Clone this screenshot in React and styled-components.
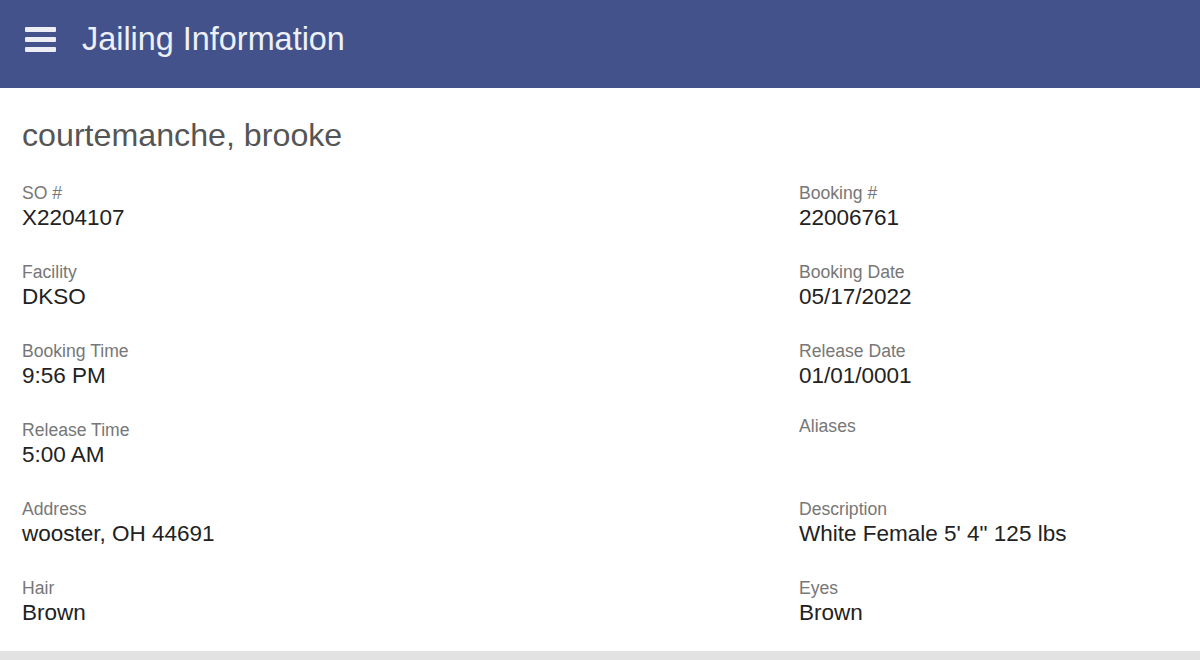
import React from 'react'
import styled, { createGlobalStyle } from 'styled-components'

const GlobalStyle = createGlobalStyle`
    html, body {
        margin: 0;
        padding: 0;
        background: #e2e2e2;
        font-family: "Liberation Sans", Arial, Helvetica, sans-serif;
    }
`

const fields = [
    ['SO #', 'X2204107'],
    ['Booking #', '22006761'],
    ['Facility', 'DKSO'],
    ['Booking Date', '05/17/2022'],
    ['Booking Time', '9:56 PM'],
    ['Release Date', '01/01/0001'],
    ['Release Time', '5:00 AM'],
    ['Aliases', ''],
    ['Address', 'wooster, OH 44691'],
    ['Description', 'White Female 5\' 4" 125 lbs'],
    ['Hair', 'Brown'],
    ['Eyes', 'Brown'],
]

const App = () => {
    return (
        <>
            <GlobalStyle />
            <Card>
                <Header>
                    <MenuButton aria-label='menu'>
                        <span />
                        <span />
                        <span />
                    </MenuButton>
                    <Title>Jailing Information</Title>
                </Header>

                <Content>
                    <Name>courtemanche, brooke</Name>
                    <Grid>
                        {fields.map(([label, value]) => (
                            <Field key={label} $empty={!value}>
                                <Label>{label}</Label>
                                {value && <Value>{value}</Value>}
                            </Field>
                        ))}
                    </Grid>
                </Content>
            </Card>
        </>
    )
}

const Card = styled.div`
    background: #ffffff;
    height: 651px;
    box-shadow: 0 2px 2px rgba(0, 0, 0, 0.4), 0 4px 8px rgba(0, 0, 0, 0.2);
`

const Header = styled.header`
    height: 88px;
    background: #43528b;
    display: flex;
    align-items: center;
    gap: 26px;
    padding-left: 25px;
    box-sizing: border-box;
`

const MenuButton = styled.div`
    width: 31px;
    display: flex;
    flex-direction: column;
    gap: 5px;
    margin-top: -10px;

    span {
        display: block;
        height: 5px;
        background: #ecedf5;
        border-radius: 1px;
    }
`

const Title = styled.h1`
    margin: -10px 0 0;
    font-size: 32.4px;
    font-weight: 400;
    color: #eef0f8;
`

const Content = styled.div`
    padding: 28px 22px 0;
`

const Name = styled.h2`
    margin: 0;
    font-size: 32.2px;
    line-height: 38px;
    font-weight: 400;
    color: #555555;
`

const Grid = styled.div`
    display: grid;
    grid-template-columns: 777px 1fr;
    grid-auto-rows: 79px;
    margin-top: 29px;
`

const Field = styled.div`
    display: flex;
    flex-direction: column;
    margin-top: ${(p) => (p.$empty ? '-4px' : '0')};
`

const Label = styled.div`
    font-size: 17.6px;
    line-height: 21px;
    color: #777777;
`

const Value = styled.div`
    font-size: 22.5px;
    line-height: 27px;
    color: #222222;
`

export default App
